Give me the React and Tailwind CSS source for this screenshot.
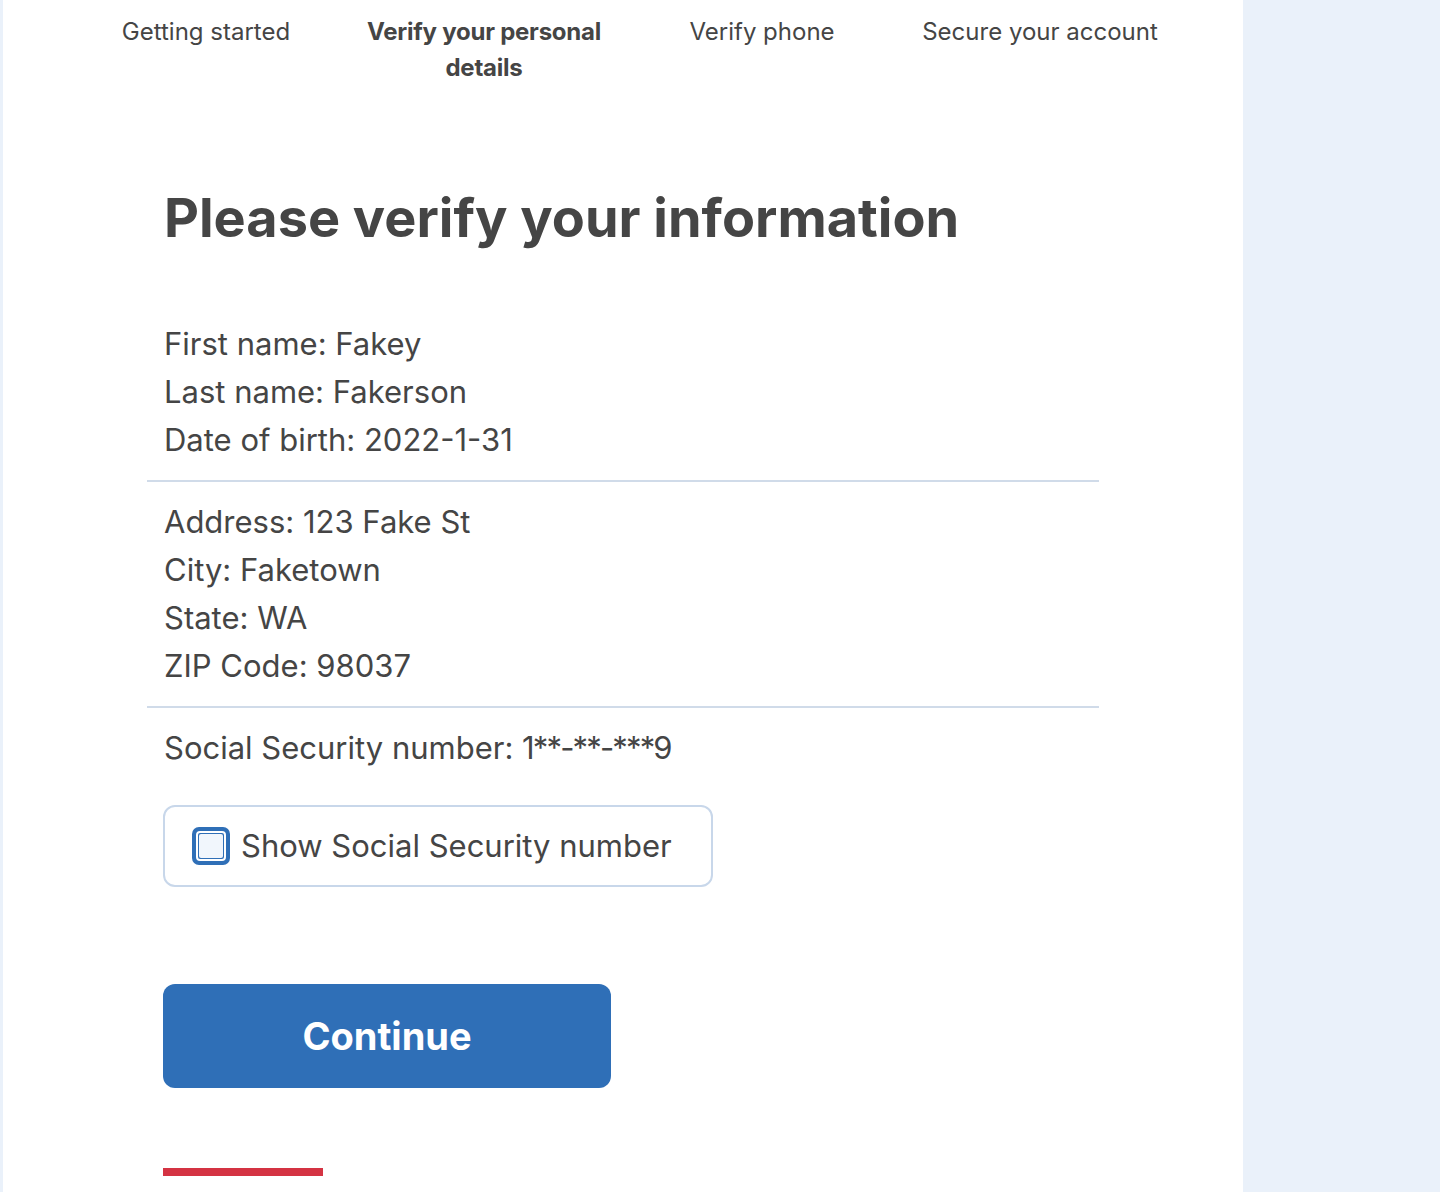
import React from 'react';

const steps = [
  { label: 'Getting started' },
  { label: 'Verify your personal details', current: true },
  { label: 'Verify phone' },
  { label: 'Secure your account' },
];

export default function App() {
  return (
    <div
      className="min-h-screen bg-[#eaf1fa] pl-[3px] text-[#454545]"
      style={{ fontFamily: 'Inter, "Noto Sans", sans-serif' }}
    >
      <div className="w-[1240px] min-h-[1192px] bg-white">
        {/* step indicator */}
        <ol className="flex justify-center pt-[14px]">
          {steps.map((s) => (
            <li
              key={s.label}
              className={
                'w-[278px] px-[8px] text-center text-[24px] leading-[36px] ' +
                (s.current ? 'font-bold tracking-[-0.01em]' : 'font-normal')
              }
            >
              {s.label}
            </li>
          ))}
        </ol>

        <main className="ml-[144px] w-[952px]">
          <h1 className="mt-[99px] pl-[17px] text-[54px] font-bold leading-[65px]">
            Please verify your information
          </h1>

          <div className="mt-[70px] border-b-2 border-[#d0dbe9] pb-4 pl-[17px] text-[31px] leading-[48px]">
            <p>First name: Fakey</p>
            <p>Last name: Fakerson</p>
            <p>Date of birth: 2022-1-31</p>
          </div>

          <div className="border-b-2 border-[#d0dbe9] py-4 pl-[17px] text-[31px] leading-[48px]">
            <p>Address: 123 Fake St</p>
            <p>City: Faketown</p>
            <p>State: WA</p>
            <p>ZIP Code: 98037</p>
          </div>

          <div className="pt-4 pl-[16px]">
            <p className="pl-[1px] text-[31px] leading-[48px]">
              Social Security number: <span className="tracking-[-0.06em]">1**-**-***9</span>
            </p>

            <label className="mt-[33px] flex h-[82px] w-[550px] items-center gap-[11px] rounded-xl border-2 border-[#c8d7ea] pl-[27px]">
              <span className="flex h-[38px] w-[38px] items-center justify-center rounded-[7px] bg-[#2f6fb7]">
                <span className="h-[30px] w-[30px] rounded-[4px] border-2 border-white bg-[#2f6fb7] p-[1px]">
                  <span className="block h-full w-full rounded-[2px] bg-[#f1f6fc]" />
                </span>
              </span>
              <span className="text-[31px] leading-[48px]">Show Social Security number</span>
            </label>

            <button className="mt-[97px] flex h-[104px] w-[448px] items-center justify-center rounded-xl bg-[#2f6fb7] text-[38px] font-bold text-white">
              Continue
            </button>

            <div className="mt-[80px] h-[8px] w-[160px] bg-[#d43343]" />
          </div>
        </main>
      </div>
    </div>
  );
}
